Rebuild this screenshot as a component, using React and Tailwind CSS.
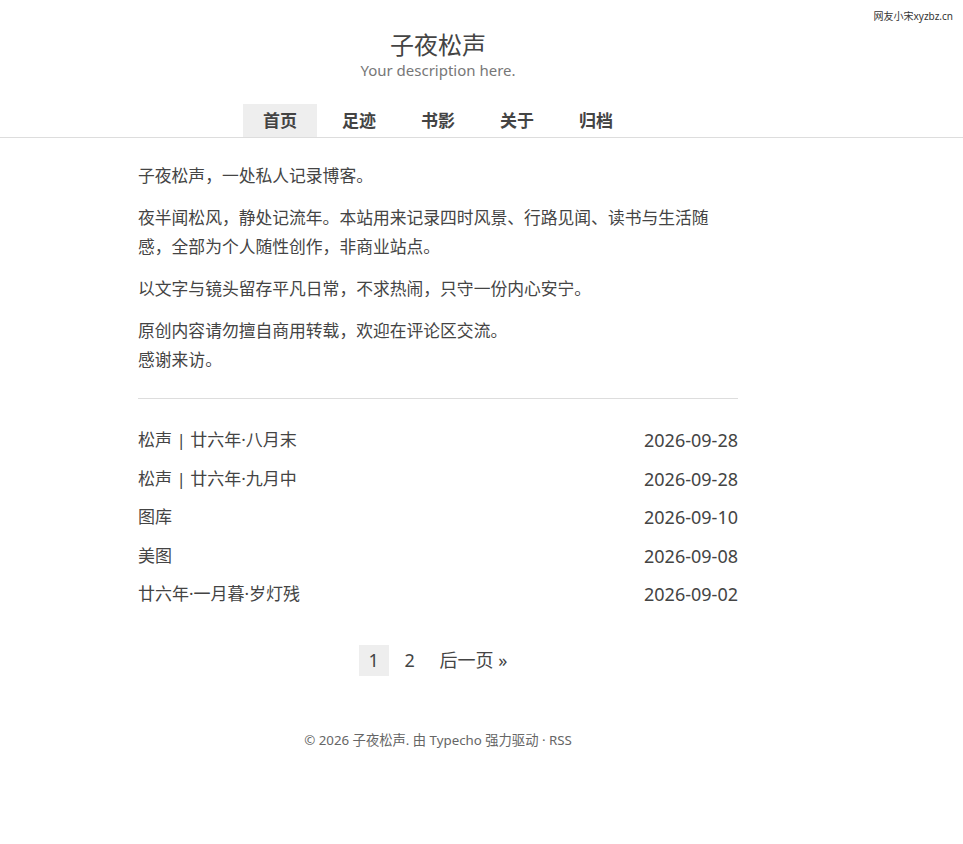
const FONT = { fontFamily: '"Noto Sans", "Noto Sans CJK SC", sans-serif' }

const NAV = ['首页', '足迹', '书影', '关于', '归档']

const POSTS = [
  { title: '松声 | 廿六年·八月末', date: '2026-09-28' },
  { title: '松声 | 廿六年·九月中', date: '2026-09-28' },
  { title: '图库', date: '2026-09-10' },
  { title: '美图', date: '2026-09-08' },
  { title: '廿六年·一月暮·岁灯残', date: '2026-09-02' },
]

export default function App() {
  return (
    <div className="relative min-h-[844px] bg-white text-[#444]" style={FONT}>
      <div className="absolute right-[10px] top-[9px] text-[10px] leading-[14px] text-[#333]">网友小宋xyzbz.cn</div>

      <header className="border-b border-[#ddd]">
        <div className="ml-[138px] w-[600px] flex flex-col items-center">
          <div className="mt-[30px] text-[24px] leading-[30px] text-[#444]">子夜松声</div>
          <div className="text-[15px] leading-[20px] text-[#777]">Your description here.</div>
          <nav className="mt-[24px] flex gap-[5px]">
            {NAV.map((n, i) => (
              <a
                key={n}
                className={[
                  'w-[74px] h-[33px] flex items-center justify-center text-[17px] font-bold text-[#444]',
                  i === 0 ? 'bg-[#eee]' : '',
                ].join(' ')}
              >
                {n}
              </a>
            ))}
          </nav>
        </div>
      </header>

      <main className="ml-[138px] w-[600px] pt-[23px]">
        <div className="max-w-[596px] text-[16.8px] leading-[29px] flex flex-col gap-[13px]">
          <p>子夜松声，一处私人记录博客。</p>
          <p>夜半闻松风，静处记流年。本站用来记录四时风景、行路见闻、读书与生活随感，全部为个人随性创作，非商业站点。</p>
          <p>以文字与镜头留存平凡日常，不求热闹，只守一份内心安宁。</p>
          <p>
            原创内容请勿擅自商用转载，欢迎在评论区交流。
            <br />
            感谢来访。
          </p>
        </div>

        <hr className="mt-[24px] border-0 border-t border-[#ddd]" />

        <ul className="mt-[22px] flex flex-col">
          {POSTS.map((p) => (
            <li key={p.title + p.date} className="flex justify-between h-[38.5px] items-center leading-[24px]">
              <a className="text-[17px]">{p.title}</a>
              <span className="text-[18px]">{p.date}</span>
            </li>
          ))}
        </ul>

        <div className="mt-[31px] flex justify-center items-center text-[18px] pr-[10px]">
          <span className="w-[30px] h-[31px] flex items-center justify-center bg-[#eee]">1</span>
          <span className="ml-[6px] w-[30px] h-[31px] flex items-center justify-center">2</span>
          <span className="ml-[15px] h-[31px] flex items-center">后一页 »</span>
        </div>

        <footer className="mt-[54px] text-center text-[13.3px] leading-[20px] text-[#666]">
          © 2026 子夜松声. 由 Typecho 强力驱动 · RSS
        </footer>
      </main>
    </div>
  )
}
